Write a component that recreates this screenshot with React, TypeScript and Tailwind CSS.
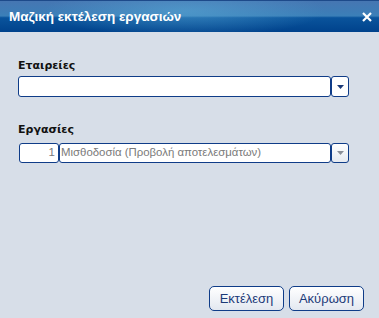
import React from 'react';

function Arrow({ muted }: { muted?: boolean }) {
  return (
    <svg width="7" height="4" viewBox="0 0 7 4" className="block">
      <path d="M0 0h7L3.5 4z" fill={muted ? '#8a8f98' : '#1b3a78'} />
    </svg>
  );
}

function DropButton({ muted }: { muted?: boolean }) {
  return (
    <div
      className={`flex h-full w-[18px] items-center justify-center rounded-[3px] border border-[#0f3c88] ${
        muted ? 'bg-[linear-gradient(#ffffff,#e6eaf0)]' : 'bg-white'
      }`}
    >
      <Arrow muted={muted} />
    </div>
  );
}

const labelFont = { fontFamily: '"DejaVu Sans", Verdana, sans-serif' };

export default function App() {
  return (
    <div
      className="flex h-[318px] w-[379px] flex-col overflow-hidden bg-[#d7dee8]"
      style={{ fontFamily: '"Liberation Sans", Arial, sans-serif' }}
    >
      {/* title bar */}
      <div className="flex h-[32px] shrink-0 items-center justify-between border-t border-[#1d4a8a] bg-[radial-gradient(ellipse_140px_26px_at_185px_10px,rgba(90,170,215,0.55),transparent),linear-gradient(#4676b2_0%,#3b7fb8_48%,#0a549c_54%,#00428c_100%)] pl-[9px] pr-[6px]">
        <span className="text-[13.5px] font-bold leading-none text-white">Μαζική εκτέλεση εργασιών</span>
        <svg width="10" height="10" viewBox="0 0 10 10" className="mr-[1px]">
          <path d="M1 1l8 8M9 1l-8 8" stroke="#fff" strokeWidth="2.2" />
        </svg>
      </div>

      {/* body */}
      <div className="flex flex-1 flex-col px-[18px]">
        <div className="mt-[27px] text-[11px] font-bold leading-[14px] text-[#111]" style={labelFont}>
          Εταιρείες
        </div>
        <div className="mt-[3px] flex h-[21px] w-[331px]">
          <div className="h-full flex-1 rounded-[3px] border border-[#0f3c88] bg-white" />
          <DropButton />
        </div>

        <div className="mt-[26px] text-[11px] font-bold leading-[14px] text-[#111]" style={labelFont}>
          Εργασίες
        </div>
        <div className="mt-[6px] ml-[1px] flex h-[20px] w-[330px]">
          <div className="flex h-full w-[40px] items-center justify-end rounded-[3px] border border-[#0f3c88] bg-white pr-[3px] text-[11.5px] text-[#7a7a7a]">
            1
          </div>
          <div className="flex h-full flex-1 items-center rounded-[3px] border border-[#0f3c88] bg-white pl-[1px] text-[11.4px] text-[#7a7a7a]">
            Μισθοδοσία (Προβολή αποτελεσμάτων)
          </div>
          <DropButton muted />
        </div>

        <div className="flex-1" />

        <div className="mb-[7px] mr-[-3px] flex justify-end gap-[5px]">
          <button className="h-[25px] w-[75px] rounded-[5px] border border-[#0f3c88] bg-[linear-gradient(#ffffff,#e3e8f0)] text-[13px] text-[#1b3a78]">
            Εκτέλεση
          </button>
          <button className="h-[25px] w-[75px] rounded-[5px] border border-[#0f3c88] bg-[linear-gradient(#ffffff,#e3e8f0)] text-[13px] text-[#1b3a78]">
            Ακύρωση
          </button>
        </div>
      </div>
    </div>
  );
}
